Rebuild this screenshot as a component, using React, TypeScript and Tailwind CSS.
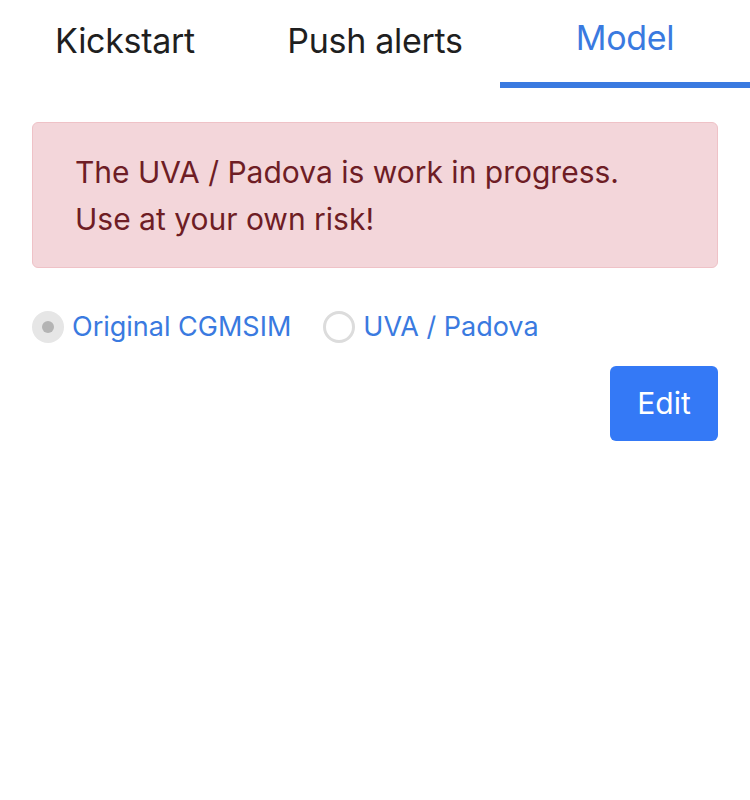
import React, { useState } from 'react';

const tabs = ['Kickstart', 'Push alerts', 'Model'];

function App() {
  const [active, setActive] = useState('Model');
  const [model, setModel] = useState('original');

  return (
    <div className="min-h-screen bg-white font-['Inter',sans-serif]">
      {/* Tabs */}
      <div className="grid grid-cols-3 h-[88px]">
        {tabs.map((tab) => (
          <button
            key={tab}
            onClick={() => setActive(tab)}
            className={`flex justify-center border-b-[6px] text-[34px] tracking-[-0.3px] ${
              active === tab
                ? 'border-[#3a7ae0] text-[#3a7ae0] pt-[12px]'
                : 'border-transparent text-[#1f1f1f] pt-[15px]'
            }`}
          >
            {tab}
          </button>
        ))}
      </div>

      <div className="px-8 pt-[34px]">
        {/* Alert */}
        <div className="rounded-md border border-[#efc2c7] bg-[#f3d6da] px-[42px] pt-[26px] pb-[24px] text-[30px] leading-[47px] text-[#6e1d25]">
          <p>The UVA / Padova is work in progress.</p>
          <p>Use at your own risk!</p>
        </div>

        {/* Model selection */}
        <div className="mt-[39px] flex items-center text-[27px] text-[#3a7ae0]">
          <label className="flex items-center gap-2 mr-[32px]">
            <span className="flex h-[32px] w-[32px] items-center justify-center rounded-full bg-[#e6e6e6]">
              {model === 'original' && <span className="h-[12px] w-[12px] rounded-full bg-[#b4b4b4]" />}
            </span>
            <span onClick={() => setModel('original')}>Original CGMSIM</span>
          </label>
          <label className="flex items-center gap-2">
            <span
              onClick={() => setModel('uva')}
              className="flex h-[32px] w-[32px] items-center justify-center rounded-full border-[3px] border-[#dcdcdc] bg-white"
            >
              {model === 'uva' && <span className="h-[12px] w-[12px] rounded-full bg-[#b4b4b4]" />}
            </span>
            <span onClick={() => setModel('uva')}>UVA / Padova</span>
          </label>
        </div>

        <div className="mt-[18px] flex justify-end">
          <button className="h-[75px] w-[108px] rounded-md bg-[#3479f6] text-[30px] text-white">Edit</button>
        </div>
      </div>
    </div>
  );
}

export default App;
